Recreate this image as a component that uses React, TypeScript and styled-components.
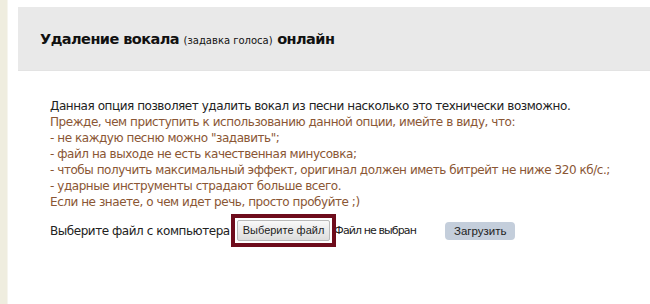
import styled, { createGlobalStyle } from "styled-components";

const GlobalStyle = createGlobalStyle`
  html, body {
    margin: 0;
    padding: 0;
    background: #ffffff;
  }
  body {
    font-family: "DejaVu Sans", Verdana, sans-serif;
  }
`;

const SPage = styled.div`
  display: flex;
  width: 650px;
  height: 304px;
  overflow: hidden;
`;

const SSideStrip = styled.div`
  width: 7px;
  flex-shrink: 0;
  background: #efeddf;
  border-right: 1px solid #f6f5ee;
`;

const SContent = styled.div`
  flex: 1;
  padding: 7px 0 0 10px;
`;

const SHeader = styled.div`
  height: 63px;
  background: #e9e9e9;
  border-bottom: 1px solid #e3e3e3;
  display: flex;
  align-items: center;
  padding-left: 22px;
`;

const STitle = styled.h1`
  margin: 0;
  font-size: 14.5px;
  font-weight: bold;
  letter-spacing: -0.55px;
  color: #111;
`;

const SSmall = styled.span`
  font-size: 10px;
  font-weight: normal;
  letter-spacing: 0;
`;

const SBody = styled.div`
  padding: 27px 0 0 32px;
  font-size: 12px;
  letter-spacing: -0.45px;
  line-height: 16px;
`;

const SLine = styled.div<{ $accent?: boolean }>`
  color: ${(p) => (p.$accent ? "#8a5634" : "#222")};
  white-space: nowrap;
`;

const SUploadRow = styled.div`
  display: flex;
  align-items: center;
  margin-top: 4px;
  color: #222;
  white-space: nowrap;
`;

const SFrame = styled.div`
  position: relative;
  z-index: 1;
  border: 4px solid #6e0c1c;
  padding: 2px 2px;
  margin-left: 1px;
  display: flex;
`;

const SFileButton = styled.div`
  padding: 3px 5px;
  border: 1px solid #b9b9b9;
  border-radius: 2px;
  background: linear-gradient(#f8f8f8, #dddddd);
  font-family: "Liberation Sans", Arial, sans-serif;
  font-size: 11px;
  letter-spacing: 0;
  line-height: 13px;
  color: #222;
`;

const SNoFile = styled.span`
  margin-left: -2px;
  margin-right: 29px;
  font-size: 11px;
  letter-spacing: -0.9px;
`;

const SSubmit = styled.div`
  padding: 2px 9px;
  background: #c4cedb;
  border-radius: 4px;
  font-family: "Liberation Sans", Arial, sans-serif;
  font-size: 11.5px;
  letter-spacing: 0;
  line-height: 14px;
  color: #222;
`;

export default function App() {
  return (
    <>
      <GlobalStyle />
      <SPage>
        <SSideStrip />
        <SContent>
          <SHeader>
            <STitle>
              Удаление вокала <SSmall>(задавка голоса)</SSmall> онлайн
            </STitle>
          </SHeader>
          <SBody>
            <SLine>
              Данная опция позволяет удалить вокал из песни насколько это технически возможно.
            </SLine>
            <SLine $accent>Прежде, чем приступить к использованию данной опции, имейте в виду, что:</SLine>
            <SLine $accent>- не каждую песню можно "задавить";</SLine>
            <SLine $accent>- файл на выходе не есть качественная минусовка;</SLine>
            <SLine $accent>
              - чтобы получить максимальный эффект, оригинал должен иметь битрейт не ниже 320 кб/с.;
            </SLine>
            <SLine $accent>- ударные инструменты страдают больше всего.</SLine>
            <SLine $accent>Если не знаете, о чем идет речь, просто пробуйте ;)</SLine>
            <SUploadRow>
              Выберите файл с компьютера
              <SFrame>
                <SFileButton>Выберите файл</SFileButton>
              </SFrame>
              <SNoFile>Файл не выбран</SNoFile>
              <SSubmit>Загрузить</SSubmit>
            </SUploadRow>
          </SBody>
        </SContent>
      </SPage>
    </>
  );
}
